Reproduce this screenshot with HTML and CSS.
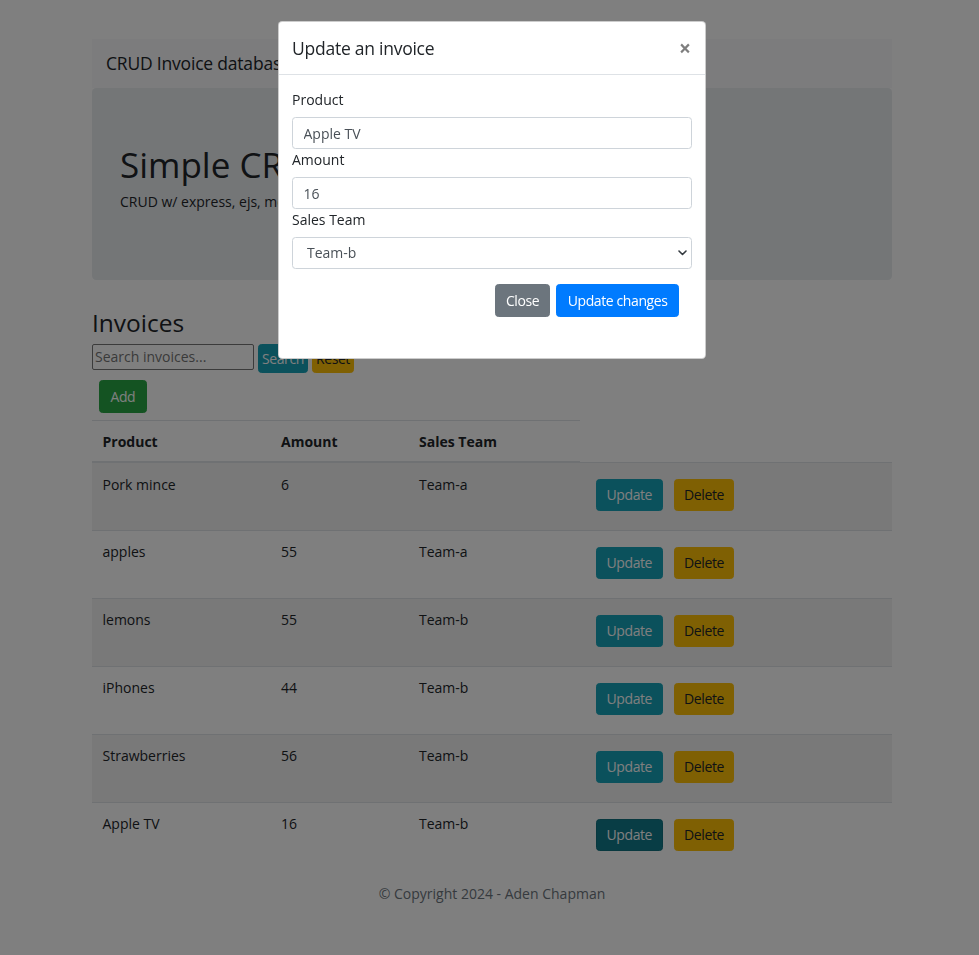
FILE: index.html
```html
<!DOCTYPE html>
<html lang="en">
<head>
<meta charset="utf-8">
<title>CRUD Invoice database</title>
<link rel="stylesheet" href="styles.css">
</head>
<body>
<div class="container">
  <nav class="navbar"><span class="brand">CRUD Invoice database</span></nav>
  <div class="jumbotron">
    <h1 class="jumbo-title">Simple CRUD Application</h1>
    <p class="jumbo-text">CRUD w/ express, ejs, mongodb and bootstrap</p>
  </div>
  <h3 class="section-title">Invoices</h3>
  <form class="search-row">
    <input class="search-input" type="text" placeholder="Search invoices...">
    <button type="button" class="btn btn-info btn-tight">Search</button>
    <button type="button" class="btn btn-warning btn-tight">Reset</button>
  </form>
  <div class="add-row"><button type="button" class="btn btn-success">Add</button></div>
  <table class="table">
    <colgroup>
      <col class="col-product"><col class="col-amount"><col class="col-team"><col class="col-actions">
    </colgroup>
    <thead>
      <tr><th>Product</th><th>Amount</th><th>Sales Team</th></tr>
    </thead>
    <tbody>
      <tr><td>Pork mince</td><td>6</td><td>Team-a</td><td class="actions"><div class="action-group"><button type="button" class="btn btn-info btn-row">Update</button><button type="button" class="btn btn-warning btn-row">Delete</button></div></td></tr>
      <tr><td>apples</td><td>55</td><td>Team-a</td><td class="actions"><div class="action-group"><button type="button" class="btn btn-info btn-row">Update</button><button type="button" class="btn btn-warning btn-row">Delete</button></div></td></tr>
      <tr><td>lemons</td><td>55</td><td>Team-b</td><td class="actions"><div class="action-group"><button type="button" class="btn btn-info btn-row">Update</button><button type="button" class="btn btn-warning btn-row">Delete</button></div></td></tr>
      <tr><td>iPhones</td><td>44</td><td>Team-b</td><td class="actions"><div class="action-group"><button type="button" class="btn btn-info btn-row">Update</button><button type="button" class="btn btn-warning btn-row">Delete</button></div></td></tr>
      <tr><td>Strawberries</td><td>56</td><td>Team-b</td><td class="actions"><div class="action-group"><button type="button" class="btn btn-info btn-row">Update</button><button type="button" class="btn btn-warning btn-row">Delete</button></div></td></tr>
      <tr><td>Apple TV</td><td>16</td><td>Team-b</td><td class="actions"><div class="action-group"><button type="button" class="btn btn-info btn-row is-active">Update</button><button type="button" class="btn btn-warning btn-row">Delete</button></div></td></tr>
    </tbody>
  </table>
  <footer class="footer">© Copyright 2024 - Aden Chapman</footer>
</div>

<div class="backdrop"></div>

<div class="modal" role="dialog">
  <div class="modal-header">
    <h5 class="modal-title">Update an invoice</h5>
    <button type="button" class="close" aria-label="Close">×</button>
  </div>
  <div class="modal-body">
    <form class="modal-form">
      <label class="form-label">Product</label>
      <input class="form-control" type="text" value="Apple TV">
      <label class="form-label">Amount</label>
      <input class="form-control" type="text" value="16">
      <label class="form-label">Sales Team</label>
      <div class="select-wrap">
        <select class="form-control form-select">
          <option>Team-a</option>
          <option selected>Team-b</option>
        </select>
        <svg class="select-arrow" width="9" height="6" viewBox="0 0 9 6"><path d="M1 1l3.5 3.5L8 1" fill="none" stroke="#343a40" stroke-width="1.6" stroke-linecap="round" stroke-linejoin="round"/></svg>
      </div>
      <div class="modal-actions">
        <button type="button" class="btn btn-secondary">Close</button>
        <button type="button" class="btn btn-primary">Update changes</button>
      </div>
    </form>
  </div>
</div>
</body>
</html>
```

FILE: styles.css
```css
* { box-sizing: border-box; }

body {
  margin: 0;
  font-family: "Open Sans", "Noto Sans", "Liberation Sans", sans-serif;
  font-size: 14px;
  line-height: 1.5;
  color: #212529;
  background: #fff;
}

.container {
  width: 800px;
  margin-left: 92px;
  padding-top: 39px;
}

.navbar {
  display: flex;
  align-items: center;
  background: #f8f9fa;
  padding: 7px 14px;
}

.brand {
  font-size: 17.5px;
  line-height: 26.25px;
  padding: 4.4px 0;
  letter-spacing: -0.2px;
}

.jumbotron {
  background: #e9ecef;
  border-radius: 4.2px;
  padding: 56px 28px 52px;
  margin-bottom: 28px;
}

.jumbo-title {
  font-size: 35px;
  font-weight: 500;
  line-height: 1.2;
  margin: 0 0 5px;
}

.jumbo-text {
  margin: 0 0 16px;
}

.section-title {
  font-size: 24.5px;
  font-weight: 500;
  line-height: 1.2;
  margin: 0 0 6.5px;
}

.search-row {
  display: flex;
  align-items: flex-start;
  gap: 4px;
  margin: 0;
}

.search-input {
  width: 162px;
  height: 26px;
  border: 1px solid #767676;
  border-radius: 2px;
  padding: 1px 2px;
  font-family: inherit;
  font-size: 14px;
  color: #212529;
  background: #fff;
}

.search-input::placeholder { color: #757575; }

.btn {
  display: inline-block;
  font-family: inherit;
  font-size: 14px;
  font-weight: 400;
  line-height: 21px;
  letter-spacing: -0.4px;
  padding: 5px 10.5px;
  border: 1px solid transparent;
  border-radius: 3.5px;
  cursor: pointer;
  white-space: nowrap;
}

.btn-tight { padding: 3px 3px; }
.btn-row { padding: 4.5px 9.5px; height: 32px; }

.btn-info { background: #17a2b8; border-color: #17a2b8; color: #fff; }
.btn-info.is-active { background: #117a8b; border-color: #10707f; }
.btn-warning { background: #ffc107; border-color: #ffc107; color: #212529; }
.btn-success { background: #28a745; border-color: #28a745; color: #fff; }
.btn-secondary { background: #6c757d; border-color: #6c757d; color: #fff; padding-left: 10px; padding-right: 10px; }
.btn-primary { background: #007bff; border-color: #007bff; color: #fff; }

.add-row {
  display: flex;
  padding: 7px;
}

.table {
  width: 800px;
  border-collapse: collapse;
  table-layout: fixed;
  margin-bottom: 13px;
}

.col-product { width: 178.5px; }
.col-amount { width: 138px; }
.col-team { width: 171.5px; }
.col-actions { width: 312px; }

.table th {
  text-align: left;
  font-weight: 700;
  padding: 10px 10.5px 9.5px;
  vertical-align: bottom;
  border-top: 1px solid #dee2e6;
  border-bottom: 2px solid #dee2e6;
}

.table td {
  padding: 10.5px;
  vertical-align: top;
  border-top: 1px solid #dee2e6;
}

.table tbody tr:nth-child(odd) { background: rgba(0, 0, 0, 0.05); }

.table td.actions {
  padding: 16px 10px 19px 16px;
}

.action-group {
  display: flex;
  gap: 11px;
}

.footer {
  text-align: center;
  color: #6c757d;
}

.backdrop {
  position: fixed;
  inset: 0;
  background: #000;
  opacity: 0.5;
  z-index: 10;
}

.modal {
  position: fixed;
  top: 21px;
  left: 278px;
  width: 428px;
  z-index: 20;
  background: #fff;
  border: 1px solid rgba(0, 0, 0, 0.2);
  border-radius: 4.2px;
}

.modal-header {
  display: flex;
  align-items: center;
  justify-content: space-between;
  padding: 13px;
  border-bottom: 1px solid #dee2e6;
}

.modal-title {
  margin: 0;
  font-size: 17.5px;
  font-weight: 500;
  line-height: 26.25px;
  letter-spacing: -0.25px;
}

.close {
  background: none;
  border: 0;
  padding: 0 1px 0 0;
  font-family: inherit;
  font-size: 21px;
  font-weight: 700;
  line-height: 1;
  color: #000;
  opacity: 0.5;
  cursor: pointer;
}

.modal-body {
  padding: 14px 13px 41px;
}

.modal-form { margin: 0; }

.form-label {
  display: block;
  margin-bottom: 7px;
  line-height: 21px;
}

.form-control {
  display: block;
  width: 100%;
  height: 32px;
  padding: 5px 10.5px;
  font-family: inherit;
  font-size: 14px;
  line-height: 20px;
  color: #495057;
  background: #fff;
  border: 1px solid #ced4da;
  border-radius: 3.5px;
}

.select-wrap { position: relative; }

.form-select {
  appearance: none;
  -webkit-appearance: none;
  padding-left: 14px;
}

.select-arrow {
  position: absolute;
  right: 5px;
  top: 13px;
  pointer-events: none;
}

.modal-actions {
  display: flex;
  justify-content: flex-end;
  gap: 6px;
  margin-top: 15px;
  padding-right: 13px;
}
```
